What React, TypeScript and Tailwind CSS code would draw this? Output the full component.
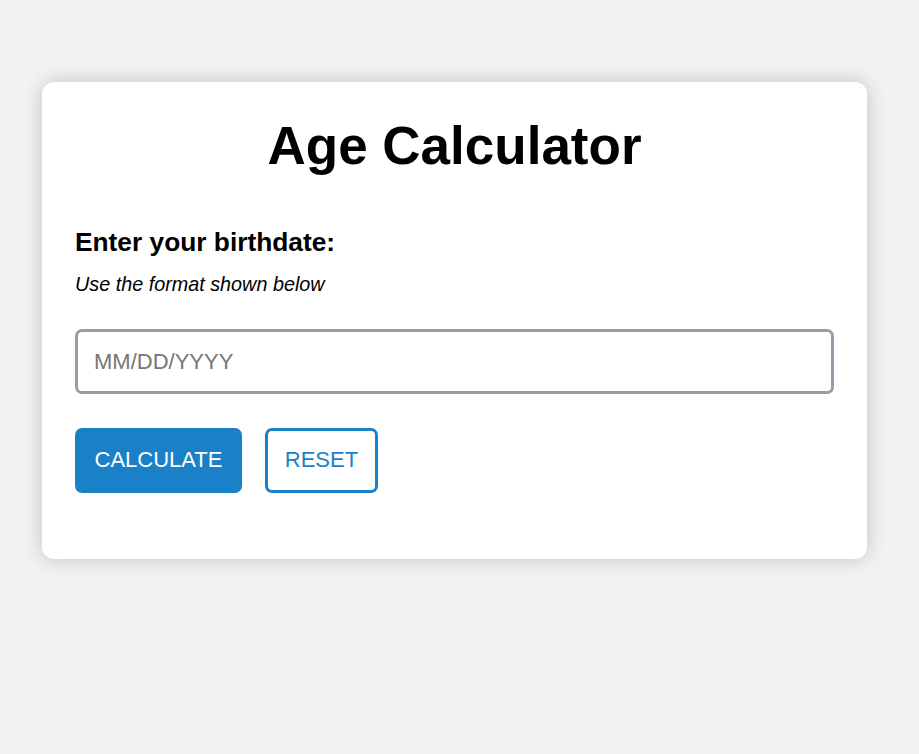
import React from "react";

export default function App() {
  return (
    <div className="min-h-[754px] w-full bg-[#f2f2f2] pt-[82px] pl-[42px]" style={{ fontFamily: '"Liberation Sans", Arial, sans-serif' }}>
      <div className="w-[825px] h-[477px] rounded-[12px] bg-white shadow-[0_0_20px_rgba(0,0,0,0.2)] px-[33px] pt-[33px]">
        <h1 className="text-center text-[53px] leading-[61px] font-bold text-black">Age Calculator</h1>
        <div className="mt-[51px] text-[26.3px] leading-[30px] font-bold text-black">Enter your birthdate:</div>
        <div className="mt-[16px] text-[19.8px] leading-[23px] italic text-black">Use the format shown below</div>
        <input
          type="text"
          placeholder="MM/DD/YYYY"
          className="mt-[33px] block w-full h-[65px] border-[3px] border-[#9b9aaa] rounded-[7px] px-[16px] text-[22px] text-black placeholder:text-[#757575] outline-none bg-white"
        />
        <div className="mt-[34px] flex gap-[23px]">
          <button className="h-[65px] w-[167px] pb-[2px] rounded-[7px] bg-[#1a81c9] text-white text-[22px]">CALCULATE</button>
          <button className="h-[65px] w-[113px] pb-[2px] rounded-[7px] border-[3px] border-[#1a81c9] bg-white text-[#1a81c9] text-[22px]">RESET</button>
        </div>
      </div>
    </div>
  );
}
